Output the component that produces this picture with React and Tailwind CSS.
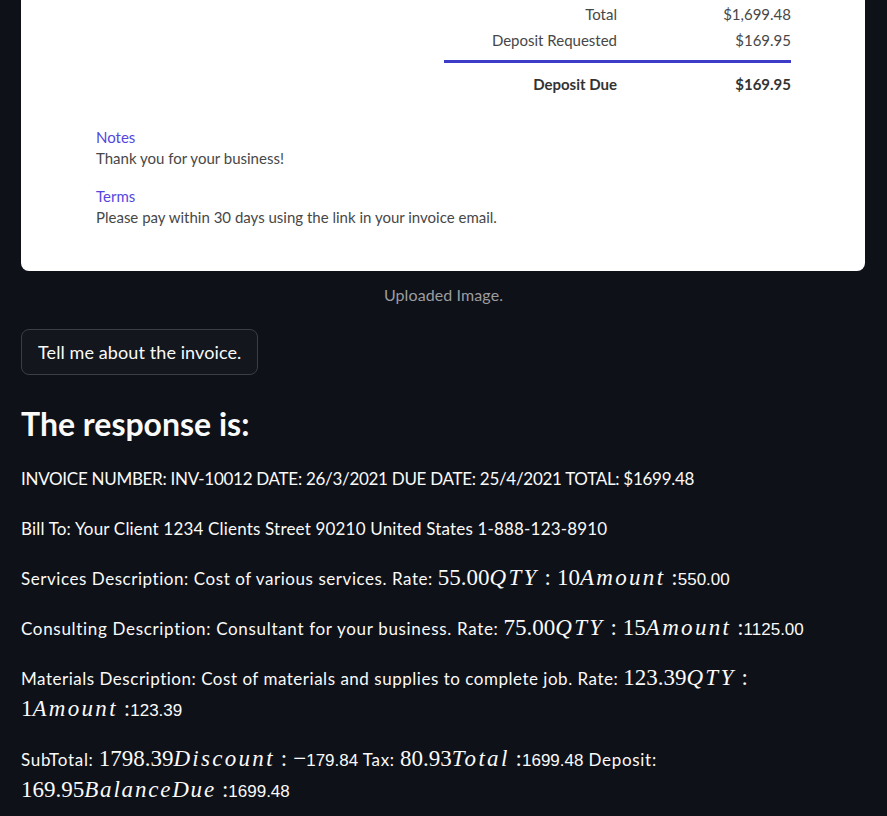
import React from "react";

// Inline math piece, rendered like KaTeX output
const M = ({ children }) => (
  <span className="font-['Liberation_Serif',serif] text-[23px] leading-none tracking-normal">
    {children}
  </span>
);
const V = ({ children }) => <i className="tracking-[2.3px]">{children}</i>;
const Rel = ({ end }) => (
  <span className={end ? "ml-[6px]" : "mx-[6px]"}>:</span>
);
const Num = ({ children }) => (
  <span className="font-['Liberation_Sans',sans-serif] text-[17px] tracking-normal">{children}</span>
);

const App = () => {
  return (
    <div className="min-h-[816px] w-full bg-[#0e1117] px-[21px] font-['Lato',sans-serif] text-[#fafafa]">
      {/* Uploaded invoice image */}
      <div className="w-[844px] rounded-b-[8px] bg-white pb-[43px] text-[15px] text-[#474747]">
        <div className="flex justify-end pr-[74px] pt-[1px]">
          <div className="w-[347px]">
            <div className="grid grid-cols-[173px_174px] leading-[26px]">
              <span className="text-right">Total</span>
              <span className="text-right">$1,699.48</span>
              <span className="text-right">Deposit Requested</span>
              <span className="text-right">$169.95</span>
            </div>
            <div className="mt-[7px] h-[3px] bg-[#3c3cc9]" />
            <div className="mt-[8px] grid grid-cols-[173px_174px] font-bold leading-[26px] text-[#333]">
              <span className="text-right">Deposit Due</span>
              <span className="text-right">$169.95</span>
            </div>
          </div>
        </div>
        <div className="mt-[30px] pl-[75px] leading-[21px]">
          <div className="text-[#5446df]">Notes</div>
          <div>Thank you for your business!</div>
          <div className="mt-[17px] text-[#5446df]">Terms</div>
          <div>Please pay within 30 days using the link in your invoice email.</div>
        </div>
      </div>
      <div className="mt-[14px] text-center text-[16px] leading-[20px] tracking-[0.1px] text-[#9c9da1]">
        Uploaded Image.
      </div>

      <button className="mt-[24px] h-[46px] rounded-[8px] border border-[#3b3e45] bg-[#13161d] px-[16px] text-[18px] tracking-[0.1px] text-[#fafafa]">
        Tell me about the invoice.
      </button>

      <h3 className="mt-[29px] text-[32px] font-bold leading-[40px]">The response is:</h3>

      <div className="mt-[22px] flex flex-col gap-[24px] text-[17px] leading-[26px] tracking-[0.45px]">
        <p className="h-[26px] tracking-[-0.29px]">
          INVOICE NUMBER: INV-10012 DATE: 26/3/2021 DUE DATE: 25/4/2021 TOTAL: $1699.48
        </p>
        <p className="h-[26px] tracking-[0.18px]">
          Bill To: Your Client 1234 Clients Street 90210 United States 1-888-123-8910
        </p>
        <p className="h-[26px] tracking-[0.55px]">
          Services Description: Cost of various services. Rate:{" "}
          <M>
            55.00<V>QTY</V>
            <Rel />
            10<V>Amount</V>
            <Rel end />
          </M>
          <Num>550.00</Num>
        </p>
        <p className="h-[26px] tracking-[0.68px]">
          Consulting Description: Consultant for your business. Rate:{" "}
          <M>
            75.00<V>QTY</V>
            <Rel />
            15<V>Amount</V>
            <Rel end />
          </M>
          <Num>1125.00</Num>
        </p>
        <div className="flex flex-col gap-[5px]">
          <p className="h-[26px] tracking-[0.52px]">
            Materials Description: Cost of materials and supplies to complete job. Rate:{" "}
            <M>
              123.39<V>QTY</V>
              <Rel end />
            </M>
          </p>
          <p className="h-[26px]">
            <M>
              1<V>Amount</V>
              <Rel end />
            </M>
            <Num>123.39</Num>
          </p>
        </div>
        <div className="flex flex-col gap-[5px]">
          <p className="h-[26px] tracking-[0.7px]">
            SubTotal:{" "}
            <M>
              1798.39<V>Discount</V>
              <Rel />−
            </M>
            <Num>179.84</Num> Tax:{" "}
            <M>
              80.93<V>Total</V>
              <Rel end />
            </M>
            <Num>1699.48</Num> Deposit:
          </p>
          <p className="h-[26px]">
            <M>
              169.95<i className="tracking-[1.8px]">BalanceDue</i>
              <Rel end />
            </M>
            <Num>1699.48</Num>
          </p>
        </div>
      </div>
    </div>
  );
};

export default App;
